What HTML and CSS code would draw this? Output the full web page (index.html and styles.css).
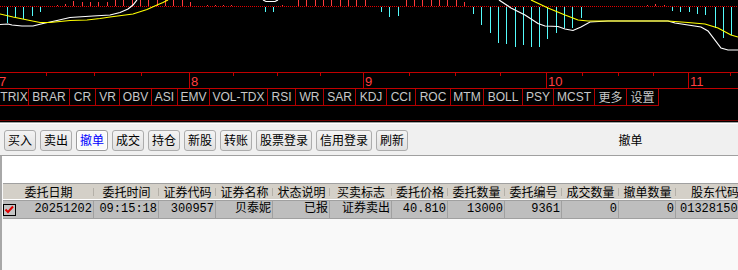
FILE: index.html
```html
<!DOCTYPE html>
<html lang="zh-CN">
<head>
  <meta charset="UTF-8" />
  <meta name="viewport" content="width=device-width, initial-scale=1.0" />
  <title>撤单</title>
  <link rel="stylesheet" href="styles.css">
</head>
<body>
  <svg class="chart" width="738" height="88" viewBox="0 0 738 88">
    <line x1="0" y1="6.5" x2="738" y2="6.5" stroke="#e00000" stroke-dasharray="1 1"/>
    <path stroke="#ff3c3c" d="M57.5 6V5M65.5 6V4M73.5 6V1M82.5 6V2M90.5 6V2M98.5 6V2M107.5 6V2M115.5 6V0M123.5 6V0M132.5 6V0M140.5 6V0M148.5 6V0M157.5 6V0M165.5 6V0M173.5 6V0M182.5 6V0M190.5 6V2M207.5 6V5M215.5 6V5M223.5 6V5M231.5 6V5M282.5 6V5M298.5 6V0M306.5 6V0M315.5 6V0M323.5 6V0M331.5 6V0M340.5 6V0M348.5 6V0M356.5 6V0M365.5 6V0M406.5 6V0M414.5 6V0M422.5 6V0M431.5 6V0M439.5 6V0M447.5 6V0M456.5 6V0M464.5 6V2M647.5 6V5M655.5 6V4M664.5 6V5"/>
    <path stroke="#54fcfc" d="M7.5 7V23M15.5 7V18M23.5 7V19M32.5 7V16M40.5 7V12M265.5 7V12M273.5 7V12M381.5 7V12M389.5 7V17M398.5 7V16M473.5 7V14M481.5 7V25M490.5 7V33M498.5 7V43M506.5 7V44M515.5 7V47M523.5 7V45M531.5 7V47M539.5 7V47M547.5 7V39M556.5 7V33M564.5 7V28M572.5 7V28M581.5 7V18M672.5 7V11M680.5 7V12M689.5 7V12M697.5 7V14M705.5 7V15M715.5 7V28M723.5 7V38M731.5 7V35"/>
    <g fill="none" stroke-width="1.2">
      <polyline stroke="#ffffff" points="0,24.5 8,24 12,25 22,26 33,26 43,23.5 57,20.5 70,17.5 93,16 110,15 120,12.5 128,9 133,5 137,0"/>
      <polyline stroke="#ffffff" points="263,0 266,1.5 275,1.5 278,0"/>
      <polyline stroke="#ffffff" points="499,0 511,8 525,15 538,23.5 545,26 558,26.5 565,29 573,30.5 581,27 590,22 608,21 668,21 675,23 701,27 708,31 721,48 728,50 738,50"/>
      <polyline stroke="#ffff00" points="0,14 13,17 30,20.5 40,22.5 50,22.5 60,21.5 70,20.5 87,20 100,18.5 110,17 133,14 147,9.5 157,5 163,2.5 168,0"/>
      <polyline stroke="#ffff00" points="531,0 548,8 565,15 578,20 588,21 668,21 688,22.5 705,24 718,28 731,35 738,37"/>
    </g>
    <line x1="0" y1="72.5" x2="738" y2="72.5" stroke="#c00000"/>
    <path stroke="#c00000" d="M189.5 72V88M363.5 72V88M546.5 72V88M688.5 72V88M46.5 73V76M94.5 73V76M141.5 73V76M233.5 73V76M277.5 73V76M320.5 73V76M409.5 73V76M455.5 73V76M500.5 73V76M582.5 73V76M618.5 73V76M653.5 73V76M730.5 73V76"/>
    <g class="axis-label">
      <text x="-1" y="86">7</text>
      <text x="191" y="86">8</text>
      <text x="365" y="86">9</text>
      <text x="548" y="86">10</text>
      <text x="690" y="86">11</text>
    </g>
  </svg>

  <div class="tabpane">
    <div class="tabs">
      <span class="tab">TRIX</span>
      <span class="tab">BRAR</span>
      <span class="tab">CR</span>
      <span class="tab">VR</span>
      <span class="tab">OBV</span>
      <span class="tab">ASI</span>
      <span class="tab">EMV</span>
      <span class="tab">VOL-TDX</span>
      <span class="tab">RSI</span>
      <span class="tab">WR</span>
      <span class="tab">SAR</span>
      <span class="tab">KDJ</span>
      <span class="tab">CCI</span>
      <span class="tab">ROC</span>
      <span class="tab">MTM</span>
      <span class="tab">BOLL</span>
      <span class="tab">PSY</span>
      <span class="tab">MCST</span>
      <span class="tab cn">更多</span>
      <span class="tab cn">设置</span>
    </div>
  </div>

  <div class="toolbar">
    <span class="btn">买入</span>
    <span class="btn">卖出</span>
    <span class="btn on">撤单</span>
    <span class="btn">成交</span>
    <span class="btn">持仓</span>
    <span class="btn">新股</span>
    <span class="btn">转账</span>
    <span class="btn wide">股票登录</span>
    <span class="btn wide">信用登录</span>
    <span class="btn">刷新</span>
    <span class="title">撤单</span>
  </div>

  <div class="panel">
    <div class="list">
      <div class="head">
        <span>委托日期</span>
        <span>委托时间</span>
        <span>证券代码</span>
        <span>证券名称</span>
        <span>状态说明</span>
        <span>买卖标志</span>
        <span>委托价格</span>
        <span>委托数量</span>
        <span>委托编号</span>
        <span>成交数量</span>
        <span>撤单数量</span>
        <span>股东代码</span>
      </div>
      <div class="row">
        <span class="first">
          <svg class="chk" width="13" height="12" viewBox="0 0 13 12">
            <rect x="0.5" y="0.5" width="12" height="11" fill="#c4c4c4" stroke="#000"/>
            <path d="M2.5 5.5L5 8L10 2.5" stroke="#e00000" stroke-width="2" fill="none"/>
          </svg>
          20251202
        </span>
        <span>09:15:18</span>
        <span>300957</span>
        <span>贝泰妮</span>
        <span>已报</span>
        <span>证券卖出</span>
        <span>40.810</span>
        <span>13000</span>
        <span>9361</span>
        <span>0</span>
        <span>0</span>
        <span class="last">01328150</span>
      </div>
    </div>
  </div>
</body>
</html>
```

FILE: styles.css
```css
body {
  margin: 0;
  width: 738px;
  height: 270px;
  overflow: hidden;
  background: #fff;
  font-family: "Noto Sans CJK SC", sans-serif;
  font-size: 12px;
}
.chart {
  display: block;
  background: #000;
}
.axis-label {
  fill: #ff4040;
  font-family: "Liberation Sans", sans-serif;
  font-size: 13px;
}

/* indicator tabs */
.tabpane {
  height: 33px;
  box-sizing: border-box;
  background: #000;
  border-top: 1px solid #c00000;
  border-bottom: 1px solid #700000;
}
.tabs {
  display: grid;
  grid-template-columns: 29px 41px 26px 24px 32px 26px 32px 58px 28px 28px 32px 31px 29px 35px 33px 39px 31px 41px 32px 32px;
  width: 659px;
}
.tab {
  box-sizing: border-box;
  height: 17px;
  border-right: 1px solid #b00000;
  border-bottom: 1px solid #b00000;
  color: #c8c8c8;
  font-family: "Liberation Sans", "Noto Sans CJK SC", sans-serif;
  font-size: 12px;
  line-height: 16px;
  text-align: center;
  white-space: nowrap;
  overflow: hidden;
}
.tab.cn {
  font-family: "Noto Sans CJK SC", sans-serif;
}

/* trade toolbar */
.toolbar {
  display: flex;
  gap: 4px;
  height: 35px;
  box-sizing: border-box;
  padding: 8px 0 0 4px;
  background: #f0f0f0;
  border-top: 1px solid #000;
  border-bottom: 1px solid #a0a0a0;
  box-shadow: inset 0 1px #a0a0a0, inset 0 2px #fff;
}
.btn {
  box-sizing: border-box;
  width: 32px;
  height: 21px;
  border: 1px solid #acacac;
  border-radius: 3px;
  background: linear-gradient(#f4f4f4, #e0e0e0);
  color: #000;
  line-height: 18px;
  text-align: center;
  white-space: nowrap;
}
.btn.wide {
  width: 56px;
}
.btn.on {
  color: #0000ff;
  background: #fafafa;
  border-color: #9c9c9c;
  box-shadow: inset 0 0 0 1px #fff;
}
.title {
  margin-left: auto;
  width: 215px;
  line-height: 20px;
  text-align: center;
}

/* order list */
.panel {
  height: 114px;
  box-sizing: border-box;
  padding-top: 27px;
  border-left: 2px solid #a8a8a8;
  overflow: hidden;
}
.list {
  height: 87px;
  background: #f9f9f9;
}
.head,
.row {
  display: grid;
  grid-template-columns: 91px 65px 57px 57px 57px 62px 56px 57px 57px 57px 57px 78px;
  width: 751px;
  margin-left: 1px;
}
.head {
  height: 17px;
  box-sizing: border-box;
  background: #d4d0c8;
  border-top: 1px solid #a0a0a0;
  border-bottom: 1px solid #fff;
  line-height: 15px;
}
.head span {
  position: relative;
  text-align: center;
  white-space: nowrap;
}
.head span::after {
  content: "";
  position: absolute;
  right: 0;
  top: 4px;
  width: 1px;
  height: 8px;
  background: #b4b0a8;
}
.row {
  height: 19px;
  box-sizing: border-box;
  background: #bebebe;
  border-top: 1px solid #a0a0a0;
  border-bottom: 1px solid #a0a0a0;
  font-family: "Liberation Mono", "Noto Sans CJK SC", monospace;
  line-height: 17px;
}
.row span {
  box-sizing: border-box;
  border-right: 1px solid #a0a0a0;
  padding-right: 1px;
  text-align: right;
  white-space: nowrap;
}
.row .first {
  display: flex;
  align-items: center;
  justify-content: space-between;
}
.row .last {
  text-align: left;
  padding-left: 4px;
}
.chk {
  display: block;
}
```
